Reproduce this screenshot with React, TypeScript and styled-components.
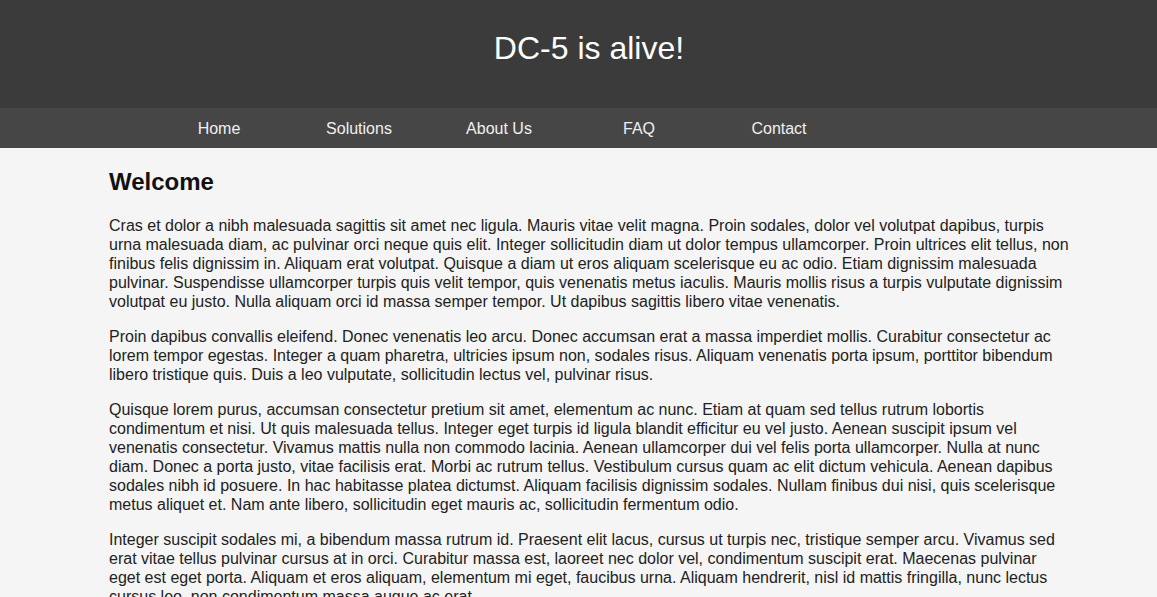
import React from "react";
import styled, { createGlobalStyle } from "styled-components";

const Global = createGlobalStyle`
  html, body { margin: 0; padding: 0; }
  body {
    background: #f5f5f5;
    font-family: "Liberation Sans", Arial, sans-serif;
    color: #222;
  }
`;

const Header = styled.header`
  background: #3b3b3b;
  height: 108px;
  box-sizing: border-box;
  padding-top: 30px;
`;

const Container = styled.div`
  width: 960px;
  padding-left: 109px;
  box-sizing: content-box;
`;

const Title = styled.h1`
  margin: 0;
  text-align: center;
  color: #fff;
  font-size: 32px;
  font-weight: normal;
  line-height: 37px;
`;

const NavBar = styled.nav`
  background: #464646;
`;

const NavList = styled.ul`
  list-style: none;
  margin: 0;
  padding: 0 0 0 40px;
  display: flex;
  height: 40px;
`;

const NavItem = styled.li`
  width: 140px;
  display: flex;
  align-items: center;
  justify-content: center;
`;

const NavLink = styled.a`
  color: #f0f0f0;
  text-decoration: none;
  font-size: 16px;
  line-height: 19px;
`;

const Main = styled.main`
  padding-top: 20px;
`;

const Heading = styled.h2`
  margin: 0 0 21px;
  font-size: 24px;
  line-height: 27px;
  font-weight: bold;
  color: #111;
`;

const Para = styled.p`
  margin: 0 0 16px;
  font-size: 16px;
  line-height: 19px;
  color: #222;
`;

const navItems = ["Home", "Solutions", "About Us", "FAQ", "Contact"];

const paragraphs = [
  "Cras et dolor a nibh malesuada sagittis sit amet nec ligula. Mauris vitae velit magna. Proin sodales, dolor vel volutpat dapibus, turpis urna malesuada diam, ac pulvinar orci neque quis elit. Integer sollicitudin diam ut dolor tempus ullamcorper. Proin ultrices elit tellus, non finibus felis dignissim in. Aliquam erat volutpat. Quisque a diam ut eros aliquam scelerisque eu ac odio. Etiam dignissim malesuada pulvinar. Suspendisse ullamcorper turpis quis velit tempor, quis venenatis metus iaculis. Mauris mollis risus a turpis vulputate dignissim volutpat eu justo. Nulla aliquam orci id massa semper tempor. Ut dapibus sagittis libero vitae venenatis.",
  "Proin dapibus convallis eleifend. Donec venenatis leo arcu. Donec accumsan erat a massa imperdiet mollis. Curabitur consectetur ac lorem tempor egestas. Integer a quam pharetra, ultricies ipsum non, sodales risus. Aliquam venenatis porta ipsum, porttitor bibendum libero tristique quis. Duis a leo vulputate, sollicitudin lectus vel, pulvinar risus.",
  "Quisque lorem purus, accumsan consectetur pretium sit amet, elementum ac nunc. Etiam at quam sed tellus rutrum lobortis condimentum et nisi. Ut quis malesuada tellus. Integer eget turpis id ligula blandit efficitur eu vel justo. Aenean suscipit ipsum vel venenatis consectetur. Vivamus mattis nulla non commodo lacinia. Aenean ullamcorper dui vel felis porta ullamcorper. Nulla at nunc diam. Donec a porta justo, vitae facilisis erat. Morbi ac rutrum tellus. Vestibulum cursus quam ac elit dictum vehicula. Aenean dapibus sodales nibh id posuere. In hac habitasse platea dictumst. Aliquam facilisis dignissim sodales. Nullam finibus dui nisi, quis scelerisque metus aliquet et. Nam ante libero, sollicitudin eget mauris ac, sollicitudin fermentum odio.",
  "Integer suscipit sodales mi, a bibendum massa rutrum id. Praesent elit lacus, cursus ut turpis nec, tristique semper arcu. Vivamus sed erat vitae tellus pulvinar cursus at in orci. Curabitur massa est, laoreet nec dolor vel, condimentum suscipit erat. Maecenas pulvinar eget est eget porta. Aliquam et eros aliquam, elementum mi eget, faucibus urna. Aliquam hendrerit, nisl id mattis fringilla, nunc lectus cursus leo, non condimentum massa augue ac erat.",
];

export default function App() {
  return (
    <>
      <Global />
      <Header>
        <Container>
          <Title>DC-5 is alive!</Title>
        </Container>
      </Header>
      <NavBar>
        <Container>
          <NavList>
            {navItems.map((n) => (
              <NavItem key={n}>
                <NavLink href="#">{n}</NavLink>
              </NavItem>
            ))}
          </NavList>
        </Container>
      </NavBar>
      <Container>
        <Main>
          <Heading>Welcome</Heading>
          {paragraphs.map((p, i) => (
            <Para key={i}>{p}</Para>
          ))}
        </Main>
      </Container>
    </>
  );
}
